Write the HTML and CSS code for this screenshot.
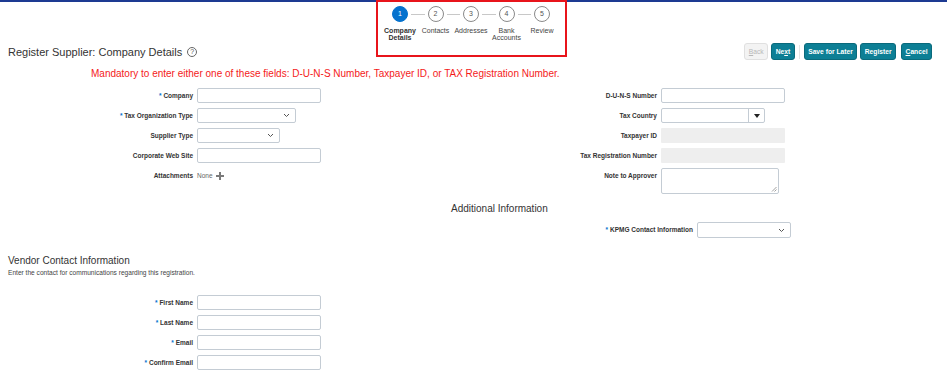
FILE: index.html
```html
<!DOCTYPE html>
<html>
    <head>
        <meta charset="utf-8">
        <link rel="stylesheet" href="styles.css">
    </head>
<body>
    <div class="topLine"></div>
    <div class="trainBox"></div>

    <div class="train">
        <div class="step current">
            <span class="circle">1</span>
            <span class="stepLabel">Company Details</span>
        </div>
        <div class="step">
            <span class="circle">2</span>
            <span class="stepLabel">Contacts</span>
        </div>
        <div class="step">
            <span class="circle">3</span>
            <span class="stepLabel">Addresses</span>
        </div>
        <div class="step">
            <span class="circle">4</span>
            <span class="stepLabel">Bank Accounts</span>
        </div>
        <div class="step last">
            <span class="circle">5</span>
            <span class="stepLabel">Review</span>
        </div>
    </div>

    <div class="titleRow">
        <h1 class="pageTitle">Register Supplier: Company Details <span class="help">?</span></h1>
        <div class="buttons">
            <button class="btn disabled"><u>B</u>ack</button>
            <button class="btn">Ne<u>x</u>t</button>
            <span class="sep"></span>
            <button class="btn">Save for Later</button>
            <button class="btn">Register</button>
            <button class="btn cancel"><u>C</u>ancel</button>
        </div>
    </div>

    <p class="mandatory">Mandatory to enter either one of these fields: D-U-N-S Number, Taxpayer ID, or TAX Registration Number.</p>

    <div class="formGrid">
        <label class="lbl"><span class="req">*</span> Company</label>
        <div class="field"><span class="input w124"></span></div>
        <label class="lbl">D-U-N-S Number</label>
        <div class="field"><span class="input w124"></span></div>

        <label class="lbl"><span class="req">*</span> Tax Organization Type</label>
        <div class="field">
            <span class="input select w99">
                <svg width="7" height="5" viewBox="0 0 7 5"><path d="M1 1 L3.5 3.5 L6 1" fill="none" stroke="#555" stroke-width="1"/></svg>
            </span>
        </div>
        <label class="lbl">Tax Country</label>
        <div class="field">
            <span class="input combo w104">
                <span class="comboBtn">
                    <svg width="6" height="4" viewBox="0 0 6 4"><path d="M0 0 L6 0 L3 4 Z" fill="#222"/></svg>
                </span>
            </span>
        </div>

        <label class="lbl">Supplier Type</label>
        <div class="field">
            <span class="input select w83">
                <svg width="7" height="5" viewBox="0 0 7 5"><path d="M1 1 L3.5 3.5 L6 1" fill="none" stroke="#555" stroke-width="1"/></svg>
            </span>
        </div>
        <label class="lbl">Taxpayer ID</label>
        <div class="field"><span class="readonly w124"></span></div>

        <label class="lbl">Corporate Web Site</label>
        <div class="field"><span class="input w124"></span></div>
        <label class="lbl">Tax Registration Number</label>
        <div class="field"><span class="readonly w124"></span></div>

        <label class="lbl">Attachments</label>
        <div class="field attach">
            <span>None</span>
            <svg width="8" height="8" viewBox="0 0 8 8"><rect x="3" y="0" width="2" height="8" fill="#7a7a7a"/><rect x="0" y="3" width="8" height="2" fill="#7a7a7a"/></svg>
        </div>
        <label class="lbl">Note to Approver</label>
        <div class="field">
            <span class="textarea">
                <svg width="6" height="6" viewBox="0 0 6 6"><path d="M5.5 1 L1 5.5 M5.5 3.5 L3.5 5.5" stroke="#888" stroke-width="0.8"/></svg>
            </span>
        </div>
    </div>

    <h2 class="addHeading">Additional Information</h2>
    <div class="kpmgRow">
        <label class="lbl"><span class="req">*</span> KPMG Contact Information</label>
        <div class="field">
            <span class="input select w94 h16">
                <svg width="7" height="5" viewBox="0 0 7 5"><path d="M1 1 L3.5 3.5 L6 1" fill="none" stroke="#555" stroke-width="1"/></svg>
            </span>
        </div>
    </div>

    <h2 class="sectionHeading">Vendor Contact Information</h2>
    <p class="instruction">Enter the contact for communications regarding this registration.</p>

    <div class="contactGrid">
        <label class="lbl"><span class="req">*</span> First Name</label>
        <div class="field"><span class="input w124"></span></div>
        <label class="lbl"><span class="req">*</span> Last Name</label>
        <div class="field"><span class="input w124"></span></div>
        <label class="lbl"><span class="req">*</span> Email</label>
        <div class="field"><span class="input w124"></span></div>
        <label class="lbl"><span class="req">*</span> Confirm Email</label>
        <div class="field"><span class="input w124"></span></div>
    </div>
</body>
</html>
```

FILE: styles.css
```css
body {
    margin: 0;
    width: 947px;
    height: 387px;
    overflow: hidden;
    font-family: "Liberation Sans", Arial, sans-serif;
    color: #333;
    background: #fff;
    position: relative;
}

.topLine {
    height: 2px;
    background: #1d3a92;
}

/* red annotation frame round the train */
.trainBox {
    position: absolute;
    left: 376px;
    top: 0;
    width: 187px;
    height: 53px;
    border: 2px solid #e8141b;
}

.train {
    display: flex;
    justify-content: center;
    padding: 4px 5px 0 0;
    height: 37px;
}

.step {
    width: 35.5px;
    display: flex;
    flex-direction: column;
    align-items: center;
    position: relative;
}

.step::after {
    content: "";
    position: absolute;
    top: 8px;
    left: calc(50% + 11px);
    width: 13.5px;
    height: 1px;
    background: #c8c8c8;
}

.step.last::after {
    display: none;
}

.circle {
    width: 14px;
    height: 14px;
    border: 1px solid #8a8a8a;
    border-radius: 50%;
    background: #fff;
    font-size: 7px;
    line-height: 14px;
    text-align: center;
    color: #555;
}

.current .circle {
    background: #0572ce;
    border-color: #0572ce;
    color: #fff;
}

.stepLabel {
    margin-top: 5px;
    font-size: 7px;
    line-height: 7px;
    text-align: center;
    color: #444;
}

.current .stepLabel {
    font-weight: bold;
    color: #333;
}

.titleRow {
    display: flex;
    justify-content: space-between;
    align-items: center;
    height: 17px;
    padding: 0 15px 0 8px;
}

.pageTitle {
    margin: 0;
    font-size: 11px;
    font-weight: normal;
    color: #333;
    display: flex;
    align-items: center;
    gap: 5px;
}

.help {
    width: 8px;
    height: 8px;
    border: 1px solid #666;
    border-radius: 50%;
    font-size: 7px;
    line-height: 8px;
    text-align: center;
    color: #555;
}

.buttons {
    display: flex;
    align-items: center;
    gap: 3px;
}

.btn {
    height: 17px;
    padding: 0 3.5px;
    border: 1px solid #0a6a7c;
    border-radius: 3px;
    background: #0d7f95;
    color: #fff;
    font-family: "Liberation Sans", Arial, sans-serif;
    font-size: 6.7px;
    font-weight: bold;
}

.btn.disabled {
    background: #f3f3f3;
    border-color: #e0e0e0;
    color: #b8b8b8;
    font-weight: normal;
}

.btn.cancel {
    margin-left: 2px;
}

.sep {
    width: 1px;
    height: 14px;
    background: #e4e4e4;
    margin: 0 1px;
}

.mandatory {
    margin: 8px 0 0 91px;
    font-size: 10px;
    line-height: 12px;
    color: #f41a1a;
}

.formGrid {
    margin-top: 8px;
    display: grid;
    grid-template-columns: 193px 270px 186px auto;
    column-gap: 4px;
    row-gap: 5px;
    align-items: start;
}

.lbl {
    font-size: 6.5px;
    font-weight: bold;
    line-height: 15px;
    text-align: right;
    color: #333;
    white-space: nowrap;
}

.req {
    color: #0572ce;
}

.field {
    display: flex;
    align-items: center;
}

.input {
    box-sizing: border-box;
    height: 15px;
    border: 1px solid #c4ccd4;
    border-radius: 2px;
    background: #fff;
    display: flex;
    align-items: center;
    justify-content: flex-end;
}

.select {
    padding-right: 5px;
}

.combo {
    justify-content: flex-end;
}

.comboBtn {
    width: 15px;
    height: 100%;
    border-left: 1px solid #c4ccd4;
    display: flex;
    align-items: center;
    justify-content: center;
}

.readonly {
    height: 15px;
    background: #eeeeee;
    border-radius: 1px;
}

.w124 { width: 124px; }
.w104 { width: 104px; }
.w99 { width: 99px; }
.w94 { width: 94px; }
.w83 { width: 83px; }
.h16 { height: 16px; }

.attach {
    height: 15px;
    gap: 3px;
    font-size: 6.5px;
    color: #666;
}

.textarea {
    box-sizing: border-box;
    width: 118px;
    height: 26px;
    border: 1px solid #c4ccd4;
    border-radius: 2px;
    display: flex;
    align-items: flex-end;
    justify-content: flex-end;
    padding: 1px;
}

.addHeading {
    margin: 8px 0 0 451px;
    font-size: 10px;
    line-height: 14px;
    font-weight: normal;
    color: #333;
}

.kpmgRow {
    margin-top: 6px;
    display: grid;
    grid-template-columns: 693px auto;
    column-gap: 4px;
}

.kpmgRow .lbl {
    line-height: 16px;
}

.sectionHeading {
    margin: 16px 0 0 8px;
    font-size: 10px;
    line-height: 14px;
    font-weight: normal;
    color: #333;
}

.instruction {
    margin: 1px 0 0 8px;
    font-size: 6.6px;
    line-height: 8px;
    color: #444;
}

.contactGrid {
    margin-top: 18px;
    display: grid;
    grid-template-columns: 193px auto;
    column-gap: 4px;
    row-gap: 5px;
}
```
